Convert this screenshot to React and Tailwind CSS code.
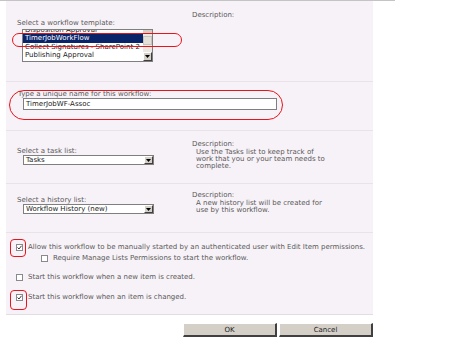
import React from "react";

const F = { fontFamily: '"DejaVu Sans", Verdana, sans-serif' };

function Arrow() {
  return (
    <svg width="5" height="3" viewBox="0 0 5 3" className="block">
      <path d="M0 0H5L2.5 3Z" fill="#000" />
    </svg>
  );
}

function DropBtn() {
  return (
    <div className="w-[9px] h-full bg-[#d4d0c8] border-t border-l border-t-white border-l-white border-b border-r border-b-[#404040] border-r-[#404040] flex items-center justify-center">
      <Arrow />
    </div>
  );
}

function Select({ value }) {
  return (
    <div className="ml-[6px] w-[131px] h-[10px] bg-white border border-[#7f7f7f] flex items-stretch">
      <div className="flex-1 pl-[2px] text-[7px] leading-[8px] text-[#222] whitespace-nowrap overflow-hidden">{value}</div>
      <DropBtn />
    </div>
  );
}

function Check({ checked }) {
  return (
    <div className="w-[7px] h-[7px] bg-white border border-[#8a8a8a] flex items-center justify-center shrink-0">
      {checked && (
        <svg width="5" height="5" viewBox="0 0 5 5" className="block">
          <path d="M0.5 2.5L2 4L4.5 0.8" stroke="#222" strokeWidth="0.9" fill="none" />
        </svg>
      )}
    </div>
  );
}

export default function App() {
  return (
    <div style={F} className="relative w-[450px] h-[347px] bg-white text-[7px] leading-[8px] text-[#595959]">
      <div className="w-[395px] h-px bg-[#c4c4c4]" />
      <div className="ml-[6px] w-[367px] bg-[#f7f2f7]">
        {/* Section 1 */}
        <div className="h-[81px] flex border-b border-[#e9e3e9]">
          <div className="w-[186px] pl-[11px] pt-[18px]">
            <div>Select a workflow template:</div>
            <div className="mt-[2px] ml-[5px] w-[131px] h-[33px] bg-white border border-[#7f7f7f] flex overflow-hidden">
              <div className="flex-1 overflow-hidden text-[#222]">
                <div className="-mt-[4px] leading-[8.3px] whitespace-nowrap">
                  <div className="pl-[2px]">Disposition Approval</div>
                  <div className="pl-[2px] bg-[#0a246a] text-white">TimerJobWorkFlow</div>
                  <div className="pl-[2px]">Collect Signatures - SharePoint 2</div>
                  <div className="pl-[2px]">Publishing Approval</div>
                </div>
              </div>
              <div className="w-[9px] bg-[#ece9e4] flex flex-col shrink-0">
                <div className="h-[4px] bg-[#d4d0c8] border-b border-[#808080]" />
                <div className="mt-[2px] h-[9px] bg-[#e4e1db] border border-[#c8c4bc]" />
                <div className="flex-1" />
                <div className="h-[9px] bg-[#d4d0c8] border-t border-l border-t-white border-l-white border-b border-r border-b-[#404040] border-r-[#404040] flex items-center justify-center">
                  <Arrow />
                </div>
              </div>
            </div>
          </div>
          <div className="pt-[10px]">Description:</div>
        </div>

        {/* Section 2 */}
        <div className="h-[49px] border-b border-[#e9e3e9] pl-[12px] pt-[8px]">
          <div>Type a unique name for this workflow:</div>
          <div className="ml-[5px] w-[254px] h-[12px] bg-white border border-[#7f7f7f] pl-[2px] text-[#222] leading-[10px]">
            TimerJobWF-Assoc
          </div>
        </div>

        {/* Section 3 */}
        <div className="h-[53px] flex border-b border-[#e9e3e9]">
          <div className="w-[186px] pl-[11px] pt-[16px]">
            <div>Select a task list:</div>
            <Select value="Tasks" />
          </div>
          <div className="pt-[9px]">
            <div>Description:</div>
            <div className="mt-[1px] pl-[4px] leading-[6.8px] w-[140px]">
              Use the Tasks list to keep track of work that you or your team needs to complete.
            </div>
          </div>
        </div>

        {/* Section 4 */}
        <div className="h-[49px] flex border-b border-[#e9e3e9]">
          <div className="w-[186px] pl-[11px] pt-[12px]">
            <div>Select a history list:</div>
            <Select value="Workflow History (new)" />
          </div>
          <div className="pt-[7px]">
            <div>Description:</div>
            <div className="mt-[1px] pl-[4px] leading-[6.8px] w-[140px]">
              A new history list will be created for use by this workflow.
            </div>
          </div>
        </div>

        {/* Section 5 */}
        <div className="h-[82px] border-b border-[#e2dde2] pl-[10px] pt-[10px]">
          <div className="flex items-center gap-[5px] h-[8px]">
            <Check checked />
            <span className="whitespace-nowrap">Allow this workflow to be manually started by an authenticated user with Edit Item permissions.</span>
          </div>
          <div className="mt-[3px] ml-[25px] flex items-center gap-[5px] h-[8px]">
            <Check />
            <span>Require Manage Lists Permissions to start the workflow.</span>
          </div>
          <div className="mt-[11px] flex items-center gap-[5px] h-[8px]">
            <Check />
            <span>Start this workflow when a new item is created.</span>
          </div>
          <div className="mt-[12px] flex items-center gap-[5px] h-[8px]">
            <Check checked />
            <span>Start this workflow when an item is changed.</span>
          </div>
        </div>
      </div>

      {/* Buttons */}
      <div className="mt-[8px] ml-[183px] flex gap-[2px]">
        <div className="w-[94px] h-[14px] bg-[#d4d0c8] border-t border-l border-t-white border-l-white border-b-2 border-r-2 border-b-[#404040] border-r-[#404040] text-center leading-[12px] text-[#222]">OK</div>
        <div className="w-[94px] h-[14px] bg-[#d4d0c8] border-t border-l border-t-white border-l-white border-b-2 border-r-2 border-b-[#404040] border-r-[#404040] text-center leading-[12px] text-[#222]">Cancel</div>
      </div>

      {/* Red annotation marks */}
      <div className="absolute left-[12px] top-[33px] w-[170px] h-[14px] border-[1.5px] border-[#e8141c] rounded-[7px] pointer-events-none" />
      <div className="absolute left-[9px] top-[90px] w-[274px] h-[30px] border-[1.5px] border-[#e8141c] rounded-[15px] pointer-events-none" />
      <div className="absolute left-[10px] top-[239px] w-[16px] h-[18px] border-[1.5px] border-[#e8141c] rounded-[4px] pointer-events-none" />
      <div className="absolute left-[10px] top-[290px] w-[17px] h-[20px] border-[1.5px] border-[#e8141c] rounded-[4px] pointer-events-none" />
    </div>
  );
}
